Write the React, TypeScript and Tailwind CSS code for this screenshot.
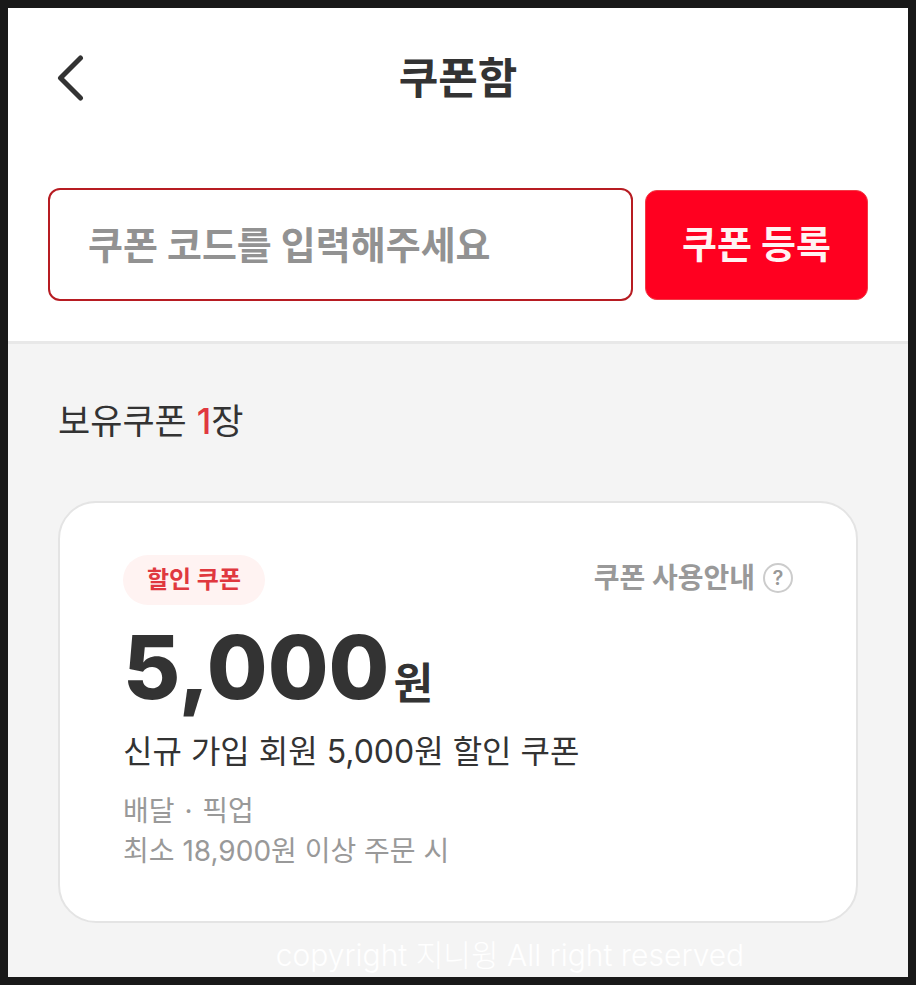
import { useState } from "react";

const coupons = [
  {
    id: "welcome",
    badge: "할인 쿠폰",
    amount: "5,000",
    title: "신규 가입 회원 5,000원 할인 쿠폰",
    types: ["배달", "픽업"],
    condition: "최소 18,900원 이상 주문 시",
  },
];

function Header() {
  return (
    <header className="relative flex h-[140px] items-center justify-center">
      <button type="button" aria-label="뒤로 가기" className="absolute left-12">
        <svg width="28" height="48" viewBox="0 0 28 48" fill="none" stroke="#333333" strokeWidth="5">
          <path d="M24.5 4 4.5 24 24.5 44" strokeLinecap="round" strokeLinejoin="round" />
        </svg>
      </button>
      <h1 className="text-[43px] leading-[60px] font-bold">쿠폰함</h1>
    </header>
  );
}

function CouponForm() {
  const [code, setCode] = useState("");

  return (
    <form
      className="flex items-center gap-3 border-b-3 border-[#e8e8e8] bg-white px-10 pt-10 pb-10"
      onSubmit={(e) => e.preventDefault()}
    >
      <input
        type="text"
        aria-label="쿠폰 코드"
        placeholder="쿠폰 코드를 입력해주세요"
        value={code}
        onChange={(e) => setCode(e.target.value)}
        className="h-[113px] min-w-0 flex-1 rounded-xl border-2 border-[#b71c22] px-[38px] text-[38px] font-bold outline-none placeholder:text-[#929292]"
      />
      <button
        type="submit"
        className="h-[110px] w-[223px] shrink-0 rounded-xl border border-[#f23b46] bg-[#ff0020] text-[38px] font-bold text-[#fff3f2]"
      >
        쿠폰 등록
      </button>
    </form>
  );
}

function CouponCard({ coupon }: { coupon: (typeof coupons)[number] }) {
  return (
    <li className="rounded-[38px] border-2 border-[#e4e4e4] bg-white px-[63px] pt-[52px] pb-[50px]">
      <div className="flex items-start justify-between">
        <span className="rounded-full bg-[#fff3f2] px-6 text-2xl leading-[50px] font-bold text-[#e0383f]">
          {coupon.badge}
        </span>
        <button type="button" className="flex items-center gap-2 text-[28px] leading-[46px] font-bold text-[#999999]">
          쿠폰 사용안내
          <span className="flex size-[30px] items-center justify-center rounded-full border-2 border-[#cccccc] text-xl leading-none font-semibold">
            ?
          </span>
        </button>
      </div>
      <p className="mt-3 flex items-baseline gap-1 leading-[100px] font-bold">
        <strong className="text-[88px] font-extrabold">{coupon.amount}</strong>
        <span className="text-[43px]">원</span>
      </p>
      <h2 className="text-[32px] leading-[38px]">{coupon.title}</h2>
      <p className="mt-5 text-[28px] leading-[40px] text-[#999999]">
        {coupon.types[0]} <span className="mx-0.5">·</span> {coupon.types[1]}
        <br />
        {coupon.condition}
      </p>
    </li>
  );
}

export default function App() {
  return (
    <div className="flex min-h-screen flex-col border-8 border-[#191919] bg-white font-[Inter,'Noto_Sans_CJK_KR',sans-serif] text-[#333333]">
      <Header />
      <CouponForm />
      <main className="flex-1 bg-[#f4f4f4] px-[50px] pt-[50px]">
        <p className="text-[35px] leading-[54px]">
          보유쿠폰 <span className="font-medium text-[#e0383f]">{coupons.length}</span>장
        </p>
        <ul className="mt-[53px]">
          {coupons.map((coupon) => (
            <CouponCard key={coupon.id} coupon={coupon} />
          ))}
        </ul>
      </main>
      <footer className="bg-[#f4f4f4] pt-3 pb-1 pl-[104px] text-center text-[30px] leading-[36px] font-light text-white">
        copyright 지니윙 All right reserved
      </footer>
    </div>
  );
}
